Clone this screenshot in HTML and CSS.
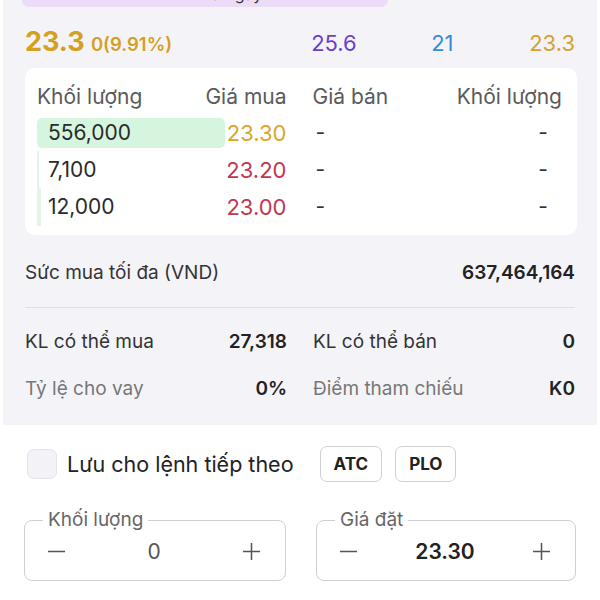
FILE: index.html
```html
<!doctype html>
<html>
<head>
  <meta charset="UTF-8">
  <title>Đặt lệnh</title>
  <link rel="stylesheet" href="styles.css">
</head>
<body>
  <div class="panel">
    <div class="tab-bar"><span class="tab-label">Mua ngay</span></div>

    <div class="quote">
      <div class="last">
        <span class="last-price">23.3</span>
        <span class="last-change">0(9.91%)</span>
      </div>
      <span class="ceil">25.6</span>
      <span class="floor">21</span>
      <span class="ref">23.3</span>
    </div>

    <div class="book">
      <div class="book-row book-head">
        <div class="half">
          <span>Khối lượng</span>
          <span>Giá mua</span>
        </div>
        <div class="half">
          <span>Giá bán</span>
          <span>Khối lượng</span>
        </div>
      </div>

      <div class="book-row">
        <div class="half">
          <div class="vol">
            <div class="vol-bar top" style="width: 100%"></div>
            <span class="vol-text">556,000</span>
          </div>
          <span class="price ref-color">23.30</span>
        </div>
        <div class="half">
          <span class="dash">-</span>
          <span class="dash right">-</span>
        </div>
      </div>

      <div class="book-row">
        <div class="half">
          <div class="vol">
            <div class="vol-bar" style="width: 1.3%"></div>
            <span class="vol-text">7,100</span>
          </div>
          <span class="price down">23.20</span>
        </div>
        <div class="half">
          <span class="dash">-</span>
          <span class="dash right">-</span>
        </div>
      </div>

      <div class="book-row">
        <div class="half">
          <div class="vol">
            <div class="vol-bar" style="width: 2.2%"></div>
            <span class="vol-text">12,000</span>
          </div>
          <span class="price down">23.00</span>
        </div>
        <div class="half">
          <span class="dash">-</span>
          <span class="dash right">-</span>
        </div>
      </div>
    </div>

    <div class="power">
      <span>Sức mua tối đa (VND)</span>
      <b>637,464,164</b>
    </div>

    <div class="stats">
      <div class="stat">
        <span>KL có thể mua</span>
        <b>27,318</b>
      </div>
      <div class="stat">
        <span>KL có thể bán</span>
        <b>0</b>
      </div>
      <div class="stat muted">
        <span>Tỷ lệ cho vay</span>
        <b>0%</b>
      </div>
      <div class="stat muted">
        <span>Điểm tham chiếu</span>
        <b>K0</b>
      </div>
    </div>
  </div>

  <div class="order">
    <div class="options">
      <label class="save">
        <span class="check"></span>
        <span>Lưu cho lệnh tiếp theo</span>
      </label>
      <button class="chip">ATC</button>
      <button class="chip">PLO</button>
    </div>

    <div class="inputs">
      <fieldset class="stepper">
        <legend>Khối lượng</legend>
        <div class="stepper-row">
          <svg class="step-icon" viewBox="0 0 20 20"><path d="M1 10h18"/></svg>
          <span class="step-value">0</span>
          <svg class="step-icon" viewBox="0 0 20 20"><path d="M1 10h18M10 1v18"/></svg>
        </div>
      </fieldset>
      <fieldset class="stepper">
        <legend>Giá đặt</legend>
        <div class="stepper-row">
          <svg class="step-icon" viewBox="0 0 20 20"><path d="M1 10h18"/></svg>
          <span class="step-value strong">23.30</span>
          <svg class="step-icon" viewBox="0 0 20 20"><path d="M1 10h18M10 1v18"/></svg>
        </div>
      </fieldset>
    </div>
  </div>
</body>
</html>
```

FILE: styles.css
```css
body{
  margin: 0;
  background: #fff;
  font-family: Inter, "Noto Sans", sans-serif;
  color: #222;
}
.panel{
  margin: 0 3px;
  padding: 0 22px 20px;
  background: #f4f4f8;
}
.tab-bar{
  margin-left: -3px;
  width: 366px;
  height: 7px;
  overflow: hidden;
  background: #ecdcf8;
  border-radius: 0 0 10px 10px;
  text-align: center;
}
.tab-label{
  display: block;
  margin-top: -16px;
  padding-left: 40px;
  font-size: 16px;
  line-height: 20px;
  color: #333;
}

/* quote line */
.quote{
  display: grid;
  grid-template-columns: 1fr 120px 98px auto;
  align-items: center;
  padding-top: 22px;
  height: 26px;
  margin-bottom: 13px;
  font-size: 22px;
  line-height: 26px;
}
.last-price{
  font-size: 27px;
  font-weight: 700;
  color: #d59f1f;
}
.last-change{
  font-size: 18.5px;
  font-weight: 600;
  color: #d59f1f;
}
.ceil{ color: #6b3fc9; }
.floor{ color: #3a8bd6; }
.ref{ color: #d5a230; }

/* order book */
.book{
  background: #fff;
  border-radius: 10px;
  padding: 11px 15px 10px 12px;
  margin-right: -2px;
}
.book-row{
  display: grid;
  grid-template-columns: 1fr 1fr;
  column-gap: 26px;
  height: 37px;
  font-size: 21px;
}
.book-head{
  height: 35px;
  color: #5a5a5a;
}
.half{
  display: flex;
  align-items: center;
  justify-content: space-between;
}
.vol{
  position: relative;
  flex: 1;
  height: 30px;
  display: flex;
  align-items: center;
  margin-right: 2px;
}
.vol-bar{
  position: absolute;
  left: 0;
  top: -4px;
  bottom: -4px;
  background: #e3f4e8;
}
.vol-bar.top{
  top: 0;
  bottom: 0;
  background: #d6f5df;
  border-radius: 5px;
}
.vol-text{
  position: relative;
  padding-left: 11px;
  color: #2a2a2a;
}
.price{
  font-size: 22px;
  color: #c2374f;
}
.ref-color{ color: #d8a72a; }
.dash{
  padding-left: 3px;
  color: #333;
}
.dash.right{ padding-right: 14px; }

/* purchasing power */
.power{
  display: flex;
  justify-content: space-between;
  align-items: center;
  margin-top: 19px;
  height: 36px;
  padding-bottom: 17px;
  border-bottom: 1px solid #dedee3;
  font-size: 19px;
  color: #333;
}
.power b, .stat b{
  font-weight: 600;
  color: #222;
}
.stats{
  display: grid;
  grid-template-columns: 1fr 1fr;
  column-gap: 26px;
  row-gap: 13px;
  padding-top: 16px;
}
.stat{
  display: flex;
  justify-content: space-between;
  align-items: center;
  height: 34px;
  font-size: 19px;
  color: #333;
}
.stat.muted span{ color: #777; }

/* order form */
.order{
  padding: 21px 24px 0;
}
.options{
  display: flex;
  align-items: center;
  height: 36px;
}
.save{
  display: flex;
  align-items: center;
  gap: 10px;
  font-size: 21.5px;
  color: #222;
  margin-right: 26px;
  margin-left: 3px;
}
.check{
  width: 28px;
  height: 28px;
  border: 1px solid #e3e3ea;
  border-radius: 7px;
  background: #f3f3f7;
}
.chip{
  height: 36px;
  padding: 0 13px;
  margin-right: 13px;
  background: #fff;
  border: 1.5px solid #cfcfd4;
  border-radius: 7px;
  font-family: Inter, "Noto Sans", sans-serif;
  font-size: 17px;
  font-weight: 700;
  color: #222;
}
.inputs{
  display: grid;
  grid-template-columns: 262px 260px;
  column-gap: 30px;
  margin-top: 28px;
}
.stepper{
  margin: 0;
  padding: 0 18px 8px;
  border: 1.5px solid #cfcfd4;
  border-radius: 8px;
}
.stepper legend{
  padding: 0 5px;
  font-size: 19px;
  line-height: 20px;
  color: #666;
}
.stepper-row{
  display: flex;
  align-items: center;
  justify-content: space-between;
  height: 42px;
  padding: 0 6px 0 4px;
}
.step-icon{
  width: 19px;
  height: 19px;
  fill: none;
  stroke: #555;
  stroke-width: 1.6;
}
.step-value{
  font-size: 21px;
  color: #555;
}
.step-value.strong{
  font-weight: 600;
  color: #222;
}
```
